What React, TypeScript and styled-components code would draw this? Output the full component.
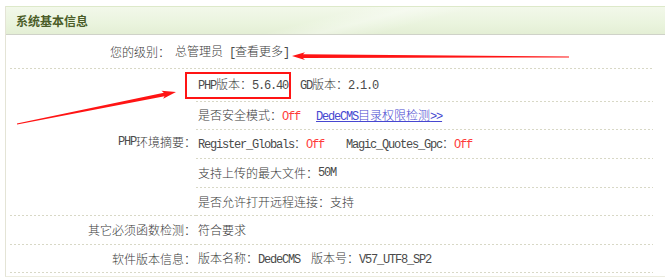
import React from "react";
import styled, { createGlobalStyle, css } from "styled-components";

const Global = createGlobalStyle`
  html, body { margin: 0; padding: 0; background: #fff; }
  body { overflow: hidden; }
`;

const Page = styled.div`
  position: relative;
  width: 665px;
  height: 277px;
  overflow: hidden;
  padding-top: 6px;
  box-sizing: border-box;
  font-family: "Noto Sans CJK SC", sans-serif;
  font-size: 12px;
  font-weight: 300;
  line-height: 16px;
  color: #3a3a3a;
`;

const Panel = styled.div`
  margin: 0 -30px 0 5px;
  border-left: 1px solid #e4e4d6;
  border-bottom: 1px solid #ececdf;
  padding-bottom: 3px;
`;

const Header = styled.div`
  height: 27px;
  border-top: 1px solid #dde9c9;
  border-bottom: 1px solid #cfd2c8;
  background:
    linear-gradient(165deg, transparent 45%, rgba(255, 255, 255, 0.35) 52%, transparent 60%),
    linear-gradient(180deg, #f2f8ea 0%, #eaf4de 60%, #e4efd5 100%);
  display: flex;
  align-items: center;
  padding-left: 10px;
`;

const Title = styled.span`
  font-weight: bold;
  font-size: 12px;
  color: #4b5d28;
`;

const Table = styled.div`
  margin-left: 4px;
  width: 643px;
`;

const dash = css`
  background-image: repeating-linear-gradient(to right, #d8d8c6 0 2px, transparent 2px 4px);
  background-size: 100% 1px;
  background-position: left bottom;
  background-repeat: no-repeat;
`;

const TopRow = styled.div`
  display: flex;
  align-items: center;
  height: 34px;
  box-sizing: border-box;
  padding-bottom: 1px;
  ${dash}
`;

const TopLabel = styled.div`
  width: 160px;
  text-align: right;
`;

const TopValue = styled.div`
  padding-left: 5px;
`;

const Grid = styled.div<{ $rows: string }>`
  display: grid;
  grid-template-columns: 186px 1fr;
  grid-template-rows: ${(p) => p.$rows};
`;

const Label = styled.div<{ $span?: number }>`
  grid-column: 1;
  grid-row: ${(p) => (p.$span ? `span ${p.$span}` : "auto")};
  display: flex;
  align-items: center;
  justify-content: flex-end;
  box-sizing: border-box;
  padding-bottom: 1px;
  ${dash}
`;

const Value = styled.div`
  grid-column: 2;
  display: flex;
  align-items: center;
  box-sizing: border-box;
  padding: 0 0 1px 2px;
  white-space: nowrap;
  ${dash}
`;

const Seg = styled.span<{ $gap?: number }>`
  margin-left: ${(p) => p.$gap ?? 0}px;
`;

const Lat = styled.span`
  font-family: "Liberation Mono", monospace;
  font-weight: 400;
  font-size: 12px;
  letter-spacing: -1.2px;
  color: #4a4a4a;
`;

const Off = styled(Lat)`
  color: #ff3b3b;
`;

const Link = styled.a`
  color: #4747d0;
  text-decoration: underline;
  text-underline-offset: 1px;

  ${Lat} {
    color: inherit;
  }
`;

const Overlay = styled.svg`
  position: absolute;
  left: 0;
  top: 0;
  pointer-events: none;
`;

export default function App() {
  return (
    <Page>
      <Global />
      <Panel>
        <Header>
          <Title>系统基本信息</Title>
        </Header>
        <Table>
          <TopRow>
            <TopLabel>您的级别：</TopLabel>
            <TopValue>
              总管理员<Lat>&nbsp;[</Lat>查看更多<Lat>]</Lat>
            </TopValue>
          </TopRow>
          <Grid $rows="33px 28px 29px 29px 28px">
            <Label $span={5}>
              <Lat>PHP</Lat>环境摘要：
            </Label>
            <Value>
              <Seg>
                <Lat>PHP</Lat>版本：<Lat>5.6.40</Lat>
              </Seg>
              <Seg $gap={12}>
                <Lat>GD</Lat>版本：<Lat>2.1.0</Lat>
              </Seg>
            </Value>
            <Value>
              <Seg>
                是否安全模式：<Off>Off</Off>
              </Seg>
              <Seg $gap={16}>
                <Link href="#">
                  <Lat>DedeCMS</Lat>目录权限检测<Lat>&gt;&gt;</Lat>
                </Link>
              </Seg>
            </Value>
            <Value>
              <Seg>
                <Lat>Register_Globals</Lat>：<Off>Off</Off>
              </Seg>
              <Seg $gap={22}>
                <Lat>Magic_Quotes_Gpc</Lat>：<Off>Off</Off>
              </Seg>
            </Value>
            <Value>
              支持上传的最大文件：<Lat>50M</Lat>
            </Value>
            <Value>是否允许打开远程连接：支持</Value>
          </Grid>
          <Grid $rows="29px 28px">
            <Label>其它必须函数检测：</Label>
            <Value>符合要求</Value>
            <Label>软件版本信息：</Label>
            <Value>
              <Seg>
                版本名称：<Lat>DedeCMS</Lat>
              </Seg>
              <Seg $gap={11}>
                版本号：<Lat>V57_UTF8_SP2</Lat>
              </Seg>
            </Value>
          </Grid>
        </Table>
      </Panel>
      <Overlay width="665" height="277" viewBox="0 0 665 277">
        <polygon
          fill="#ff1414"
          points="292,56 305,52.3 303,54.2 569,56.5 569,57.4 303,58 305,60"
        />
        <polygon
          fill="#ff1414"
          points="176,92 161.5,90.8 163.85,92.64 16.9,123.5 17.1,124.5 164.55,96.16 163.1,98.7"
        />
        <rect x="186" y="73" width="104" height="25" fill="none" stroke="#ff1414" strokeWidth="2" />
      </Overlay>
    </Page>
  );
}
